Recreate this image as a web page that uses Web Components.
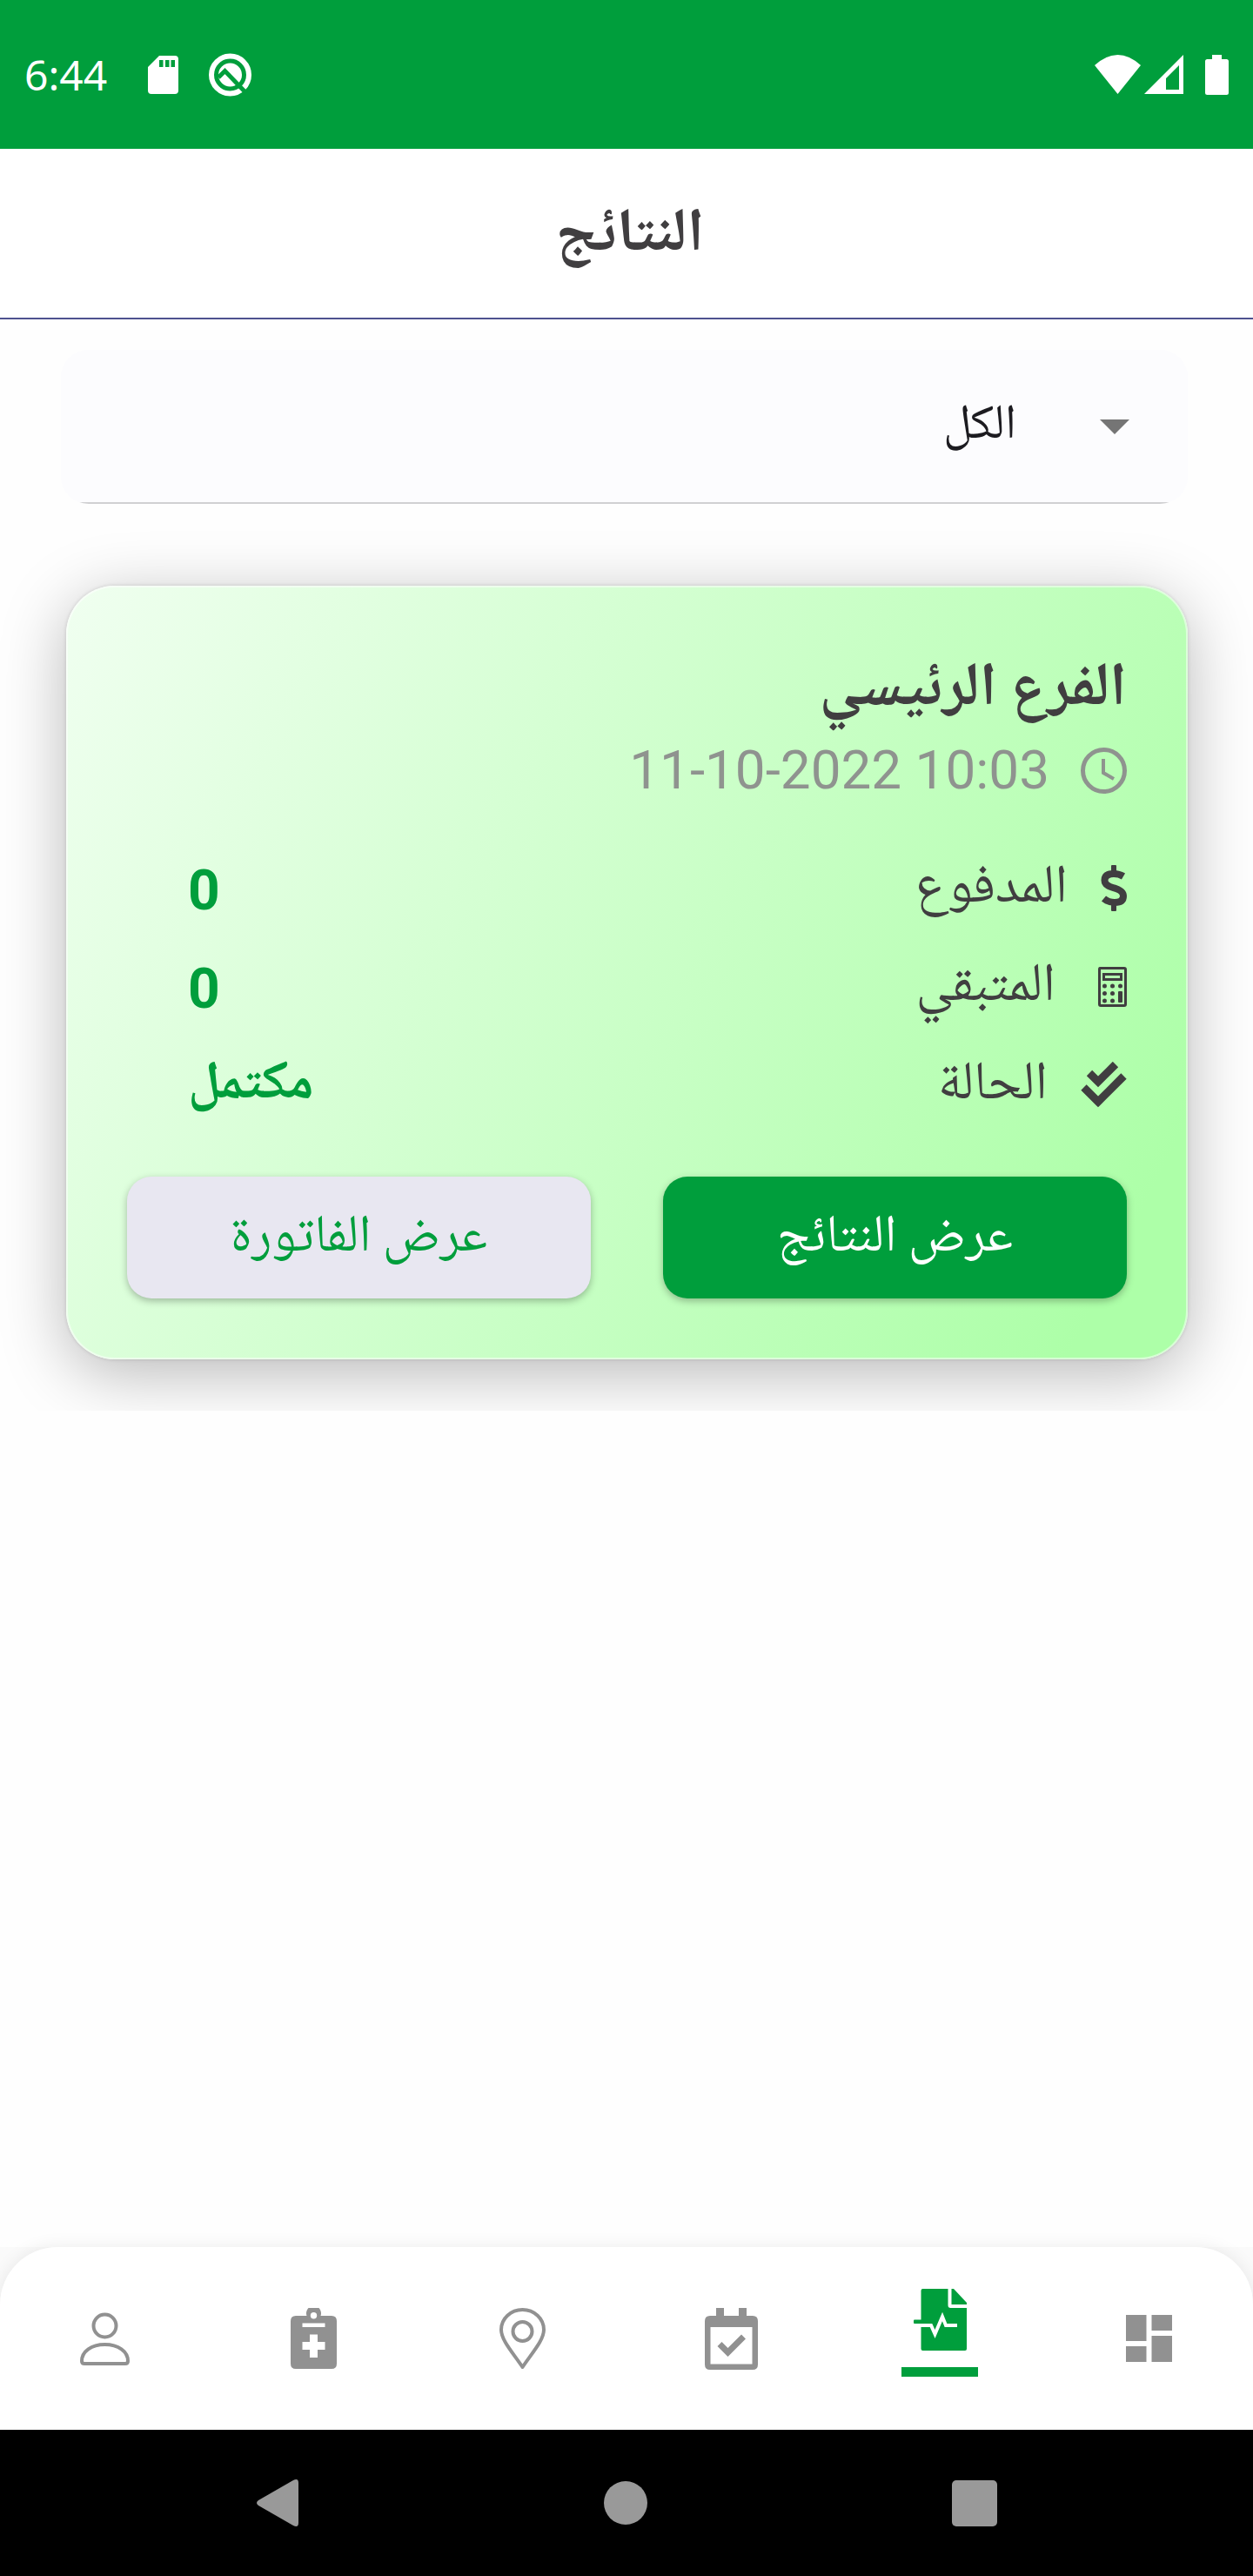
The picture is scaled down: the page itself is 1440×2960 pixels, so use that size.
<!DOCTYPE html>
<html lang="ar" dir="rtl">
<head>
<meta charset="utf-8">
<meta name="viewport" content="width=device-width, initial-scale=1">
<title>النتائج</title>
<style>
  :root {
    --green: #009e3c;
    --ink: #403e40;
    --muted: #919191;
    --digits: Roboto, sans-serif;
  }
  html, body { margin: 0; }
  body {
    background: #fefefe;
    color: var(--ink);
    font-family: "Noto Naskh Arabic", Roboto, "DejaVu Sans", sans-serif;
  }
</style>
</head>
<body>
<results-app></results-app>

<script>
const ICONS = {
  sd: [35, 44, '<path fill-rule="evenodd" d="M13 0H31q4 0 4 4V40q0 4-4 4H4q-4 0-4-4V13zM13 5v8h4.500V5zM20 5v8h4.500V5zM26.500 5v8H31V5z"/>'],
  q: [49, 50, '<circle cx="24.500" cy="25" r="21.500" fill="none" stroke="currentColor" stroke-width="6"/><circle cx="24.500" cy="25" r="13.500"/><path d="M11 28L18.500 20.500L43 46" fill="none" stroke="#009e3c" stroke-width="5"/>'],
  wifi: [53, 45, '<path d="M0 12Q26.500-12 53 12L26.500 45z"/>'],
  signal: [45, 45, '<path fill-rule="evenodd" d="M45 0V45H0zM40 12L25 27V40H40z"/>'],
  battery: [27, 46, '<path d="M8 0H19V5H24.500Q27 5 27 7.500V43.500Q27 46 24.500 46H2.500Q0 46 0 43.500V7.500Q0 5 2.500 5H8z"/>'],
  arrow: [34, 17, '<path d="M0 0H34L17 17z"/>'],
  clock: [53, 53, '<circle cx="26.500" cy="26.500" r="24" fill="none" stroke="currentColor" stroke-width="5"/><path d="M26 13V29L38 36" fill="none" stroke="currentColor" stroke-width="4"/>'],
  dollar: [30, 53, '<rect x="12" width="6" height="9" rx="1"/><rect x="12" y="44" width="6" height="9" rx="1"/><path d="M26 13Q21 10 15 10Q4.500 10 4.500 17.500Q4.500 23.500 14 26Q26 29 26 35.500Q26 43 16 43Q9 43 3.500 38.500" fill="none" stroke="currentColor" stroke-width="8"/>'],
  calc: [44, 46, '<path fill-rule="evenodd" d="M13 0H41q3 0 3 3V43q0 3-3 3H14q-3 0-3-3V3q0-3 2-3zM14 3V43H41V3z"/><path fill-rule="evenodd" d="M16 7H39V16H16zM19 10V13H36V10z"/><circle cx="18.500" cy="22" r="2.500"/><circle cx="27.500" cy="22" r="2.500"/><circle cx="36.500" cy="22" r="2.500"/><circle cx="18.500" cy="30.500" r="2.500"/><circle cx="27.500" cy="30.500" r="2.500"/><circle cx="18.500" cy="39" r="2.500"/><circle cx="27.500" cy="39" r="2.500"/><rect x="34" y="28" width="5" height="13" rx="1"/>'],
  checks: [53, 53, '<g fill="none" stroke="currentColor" stroke-width="9" stroke-linejoin="miter"><path d="M10 13L20 23L40 3"/><path d="M3.500 29.500L20 46L49.500 16.500"/></g>'],
  user: [57, 61, '<g fill="none" stroke="currentColor" stroke-width="4"><circle cx="28.500" cy="15.500" r="13"/><path d="M2 56C2 45 13 37 28.500 37S55 45 55 56q0 3-3 3H5q-3 0-3-3z"/></g>'],
  clipboard: [53, 70, '<path fill-rule="evenodd" d="M6 9H18.500A8.500 8.500 0 1 1 34.500 9H47q6 0 6 6V64q0 6-6 6H6q-6 0-6-6V15q0-6 6-6zM26.500 5a3.700 3.700 0 1 0 0 7.400a3.700 3.700 0 1 0 0-7.400zM13.500 17.500v4.500h26v-4.500zM22 30.500V39H13.500v9H22v9h9V48h8.500V39H31V30.500z"/>'],
  pin: [53, 70, '<g fill="none" stroke="currentColor" stroke-width="4"><path stroke-linejoin="round" d="M26.500 68C15 51 2 37 2 25a24.500 23 0 0 1 49 0C51 37 38 51 26.500 68z"/><circle cx="26.500" cy="27" r="11"/></g>'],
  calendar: [61, 71, '<path fill-rule="evenodd" d="M13 0h9V9H39V0h9V9h7q6 0 6 6V65q0 6-6 6H6q-6 0-6-6V15q0-6 6-6h7zM6.500 22V64.500H54.500V22z"/><path d="M17 41.500L26.500 51L44.500 33" fill="none" stroke="currentColor" stroke-width="7"/>'],
  report: [61, 71, '<path d="M8.500 2q0-2 2-2H39.500V19q0 3 3 3H61V69q0 2-2 2H10.500q-2 0-2-2z"/><path d="M43.500 0H46L61 16v2H43.500z"/><rect y="35.500" width="12" height="4.500" rx="1"/><path d="M8 42H20L24.500 52L33 32L37 42H50" fill="none" stroke="#fff" stroke-width="4"/>'],
  dashboard: [53, 54, '<path d="M0 0H23.500V30H0zM29.500 0H53V18H29.500zM29.500 24H53V54H29.500zM0 36H23.500V54H0z"/>'],
  back: [50, 56, '<path d="M44 2L4 25Q0 28 4 31L44 54Q50 57 50 51V5Q50-1 44 2z"/>'],
  home: [50, 50, '<circle cx="25" cy="25" r="25"/>'],
  recent: [52, 53, '<rect width="52" height="53" rx="5"/>']
};

function define(tag, html) {
  const template = document.createElement('template');
  template.innerHTML = html;
  customElements.define(tag, class extends HTMLElement {
    constructor() {
      super();
      this.attachShadow({ mode: 'open' }).append(template.content.cloneNode(true));
    }
  });
}

customElements.define('app-icon', class extends HTMLElement {
  connectedCallback() {
    if (this.shadowRoot) return;
    const [w, h, body] = ICONS[this.getAttribute('name')];
    this.attachShadow({ mode: 'open' }).innerHTML =
      `<style>:host{display:block;flex:none}svg{display:block}</style>
       <svg width="${w}" height="${h}" viewBox="0 0 ${w} ${h}" fill="currentColor" aria-hidden="true">${body}</svg>`;
  }
});

define('status-bar', `
<style>
  :host { display: flex; direction: ltr; align-items: center; justify-content: space-between;
    height: 171px; padding: 0 28px; background: var(--green); color: #fff; }
  div { display: flex; align-items: center; }
  .time { font: 48px/56px "Noto Sans", sans-serif; }
  .start { gap: 35px; }
  .start .time { margin-right: 12px; }
  .end { gap: 4px; }
  .end .battery { margin-left: 21px; }
</style>
<div class="start"><span class="time">6:44</span><app-icon name="sd"></app-icon><app-icon name="q"></app-icon></div>
<div class="end"><app-icon name="wifi"></app-icon><app-icon name="signal"></app-icon><app-icon class="battery" name="battery"></app-icon></div>
`);

define('page-header', `
<style>
  :host { display: flex; box-sizing: border-box; align-items: center; justify-content: center; height: 196px;
    padding: 10px 0 0 8px; background: #fff; border-bottom: 2px solid #4e528f; }
  h1 { margin: 0; font-size: 70px; line-height: 96px; font-weight: 700; }
</style>
<h1><slot></slot></h1>
`);

define('branch-filter', `
<style>
  :host { display: flex; align-items: center; gap: 96px; height: 177px; padding: 0 67px;
    border-radius: 32px; background: linear-gradient(#d0d0d2, #d0d0d2) bottom / 100% 2px no-repeat #fcfcfe; }
  app-icon { color: #757575; }
  select { flex: 1; height: 120px; padding: 0; border: 0; outline: 0; background: none; appearance: none;
    font: inherit; font-size: 56px; color: #1c1b20; }
</style>
<app-icon name="arrow"></app-icon>
<select aria-label="الفرع"><option>الكل</option></select>
`);

define('detail-row', `
<style>
  :host { display: flex; align-items: center; justify-content: space-between; height: 113px;
    font-size: 62px; line-height: 80px; }
  .label { display: flex; align-items: center; gap: 38px; }
  .label ::slotted(span), .value ::slotted(span) { display: block; padding-top: 4px; }
  .value { margin-inline-end: 70px; color: var(--green); font-weight: 700; }
  .value ::slotted(.number) { padding-top: 6px; font-family: var(--digits); font-size: 64px; }
</style>
<div class="label"><slot name="icon"></slot><slot name="label"></slot></div>
<div class="value"><slot></slot></div>
`);

define('action-button', `
<style>
  :host { display: block; flex: 1; }
  button { display: block; width: 100%; height: 140px; padding: 4px 0 0; border: 0; border-radius: 28px;
    background: var(--button-bg); color: var(--button-ink); font: inherit; font-size: 60px; line-height: 80px;
    box-shadow: 0 3px 8px rgba(0, 0, 0, .28); }
</style>
<button type="button"><slot></slot></button>
`);

define('result-card', `
<style>
  :host { display: block; box-sizing: border-box; padding: 72px 68px 68px; border: 2px solid rgba(255, 255, 255, .5);
    border-radius: 56px;
    background: linear-gradient(117deg, #f0fff0, #adffa8 92%) border-box;
    box-shadow: 0 16px 76px rgba(0, 0, 0, .28), 0 0 4px rgba(0, 0, 0, .15); }
  h2 { margin: 0; font-size: 70px; line-height: 96px; font-weight: 700; }
  .date { display: flex; align-items: center; gap: 36px; height: 84px; color: #8f938f;
    font-size: 62px; line-height: 72px; }
  .date ::slotted(bdi) { font-family: var(--digits); }
  .rows { padding-top: 37px; }
  .actions { display: flex; gap: 83px; padding-top: 49px; }
  .primary { --button-bg: var(--green); --button-ink: #fff; }
  .secondary { --button-bg: #e8e7f1; --button-ink: var(--green); }
</style>
<h2><slot name="title"></slot></h2>
<div class="date"><app-icon name="clock"></app-icon><slot name="date"></slot></div>
<div class="rows"><slot></slot></div>
<div class="actions">
  <action-button class="primary">عرض النتائج</action-button>
  <action-button class="secondary">عرض الفاتورة</action-button>
</div>
`);

define('tab-item', `
<style>
  :host { display: flex; flex: 1; }
  a { display: flex; flex: 1; flex-direction: column; align-items: center; justify-content: center; color: var(--muted); }
  :host([active]) a { gap: 19px; padding-bottom: 14px; color: var(--green); }
  :host([active]) a::after { content: ""; width: 88px; height: 11px; background: var(--green); }
</style>
<a href="#"><slot></slot></a>
`);

define('tab-bar', `
<style>
  :host { display: block; background: #fafafa; }
  nav { display: flex; height: 210px; border-radius: 66px 66px 0 0; background: #fff; box-shadow: 0 0 20px rgba(0, 0, 0, .08); }
</style>
<nav>
  <tab-item><app-icon name="dashboard"></app-icon></tab-item>
  <tab-item active><app-icon name="report"></app-icon></tab-item>
  <tab-item><app-icon name="calendar"></app-icon></tab-item>
  <tab-item><app-icon name="pin"></app-icon></tab-item>
  <tab-item><app-icon name="clipboard"></app-icon></tab-item>
  <tab-item><app-icon name="user"></app-icon></tab-item>
</nav>
`);

define('system-bar', `
<style>
  :host { display: flex; direction: ltr; align-items: center; justify-content: space-between;
    height: 168px; padding: 0 294px 0 292px; background: #000; }
  button { display: flex; justify-content: center; width: 52px; padding: 0; border: 0; background: none; color: #999; }
</style>
<button type="button" aria-label="رجوع"><app-icon name="back"></app-icon></button>
<button type="button" aria-label="الرئيسية"><app-icon name="home"></app-icon></button>
<button type="button" aria-label="التطبيقات"><app-icon name="recent"></app-icon></button>
`);

define('results-app', `
<style>
  :host { display: flex; flex-direction: column; min-height: 100vh; }
  main { flex: 1; }
  .filter { padding: 35px 75px 0 70px; }
  .list { padding: 94px 75px 59px 76px; overflow: hidden; }
</style>
<status-bar></status-bar>
<page-header>النتائج</page-header>
<main>
  <div class="filter"><branch-filter></branch-filter></div>
  <div class="list">
    <result-card>
      <span slot="title">الفرع الرئيسي</span>
      <bdi slot="date" dir="ltr">11-10-2022 10:03</bdi>
      <detail-row><app-icon slot="icon" name="dollar"></app-icon><span slot="label">المدفوع</span><span class="number">0</span></detail-row>
      <detail-row><app-icon slot="icon" name="calc"></app-icon><span slot="label">المتبقي</span><span class="number">0</span></detail-row>
      <detail-row><app-icon slot="icon" name="checks"></app-icon><span slot="label">الحالة</span><span>مكتمل</span></detail-row>
    </result-card>
  </div>
</main>
<tab-bar></tab-bar>
<system-bar></system-bar>
`);
</script>
</body>
</html>
